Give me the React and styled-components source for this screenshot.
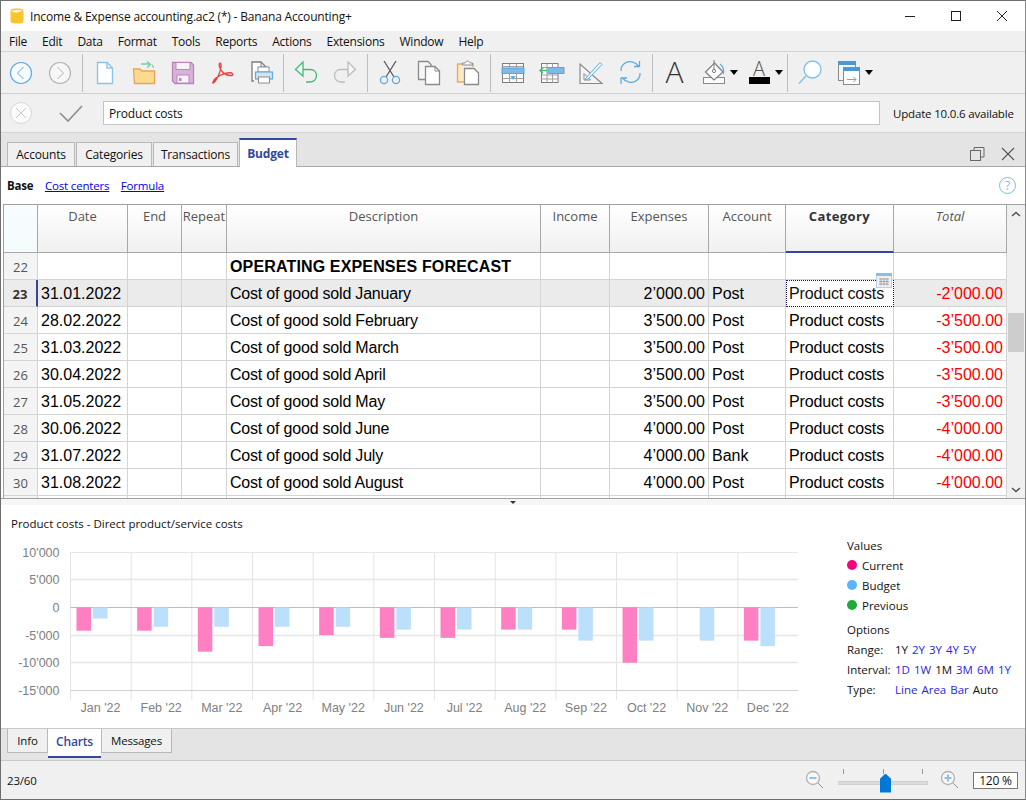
import React from 'react';
import styled, { createGlobalStyle } from 'styled-components';

const UI_FONT = '"Open Sans", "Noto Sans", sans-serif';
const CELL_FONT = '"Liberation Sans", Arial, sans-serif';
const BLUE = '#34489a';

const GlobalStyle = createGlobalStyle`
	html, body { margin: 0; padding: 0; background: #fff; overflow: hidden; }
	* { box-sizing: border-box; }
`;

const rows = [
	{ no: 22, title: 'OPERATING EXPENSES FORECAST' },
	{ no: 23, date: '31.01.2022', desc: 'Cost of good sold January', exp: '2’000.00', acc: 'Post', total: '-2’000.00', current: true },
	{ no: 24, date: '28.02.2022', desc: 'Cost of good sold February', exp: '3’500.00', acc: 'Post', total: '-3’500.00' },
	{ no: 25, date: '31.03.2022', desc: 'Cost of good sold March', exp: '3’500.00', acc: 'Post', total: '-3’500.00' },
	{ no: 26, date: '30.04.2022', desc: 'Cost of good sold April', exp: '3’500.00', acc: 'Post', total: '-3’500.00' },
	{ no: 27, date: '31.05.2022', desc: 'Cost of good sold May', exp: '3’500.00', acc: 'Post', total: '-3’500.00' },
	{ no: 28, date: '30.06.2022', desc: 'Cost of good sold June', exp: '4’000.00', acc: 'Post', total: '-4’000.00' },
	{ no: 29, date: '31.07.2022', desc: 'Cost of good sold July', exp: '4’000.00', acc: 'Bank', total: '-4’000.00' },
	{ no: 30, date: '31.08.2022', desc: 'Cost of good sold August', exp: '4’000.00', acc: 'Post', total: '-4’000.00' },
];

const months = [
	{ label: "Jan '22", current: 4200, budget: 2000 },
	{ label: "Feb '22", current: 4200, budget: 3500 },
	{ label: "Mar '22", current: 8000, budget: 3500 },
	{ label: "Apr '22", current: 7000, budget: 3500 },
	{ label: "May '22", current: 5000, budget: 3500 },
	{ label: "Jun '22", current: 5500, budget: 4000 },
	{ label: "Jul '22", current: 5500, budget: 4000 },
	{ label: "Aug '22", current: 4000, budget: 4000 },
	{ label: "Sep '22", current: 4000, budget: 6000 },
	{ label: "Oct '22", current: 10000, budget: 6000 },
	{ label: "Nov '22", current: 0, budget: 6000 },
	{ label: "Dec '22", current: 6000, budget: 7000 },
];

const Icon = ( { children, w = 30, h = 30 } ) => (
	<svg width={ w } height={ h } viewBox={ `0 0 ${ w } ${ h }` } fill="none">{ children }</svg>
);

const icons = {
	back: <Icon><circle cx="15" cy="15" r="10.5" fill="#f7fbfe" stroke="#5fabdf" strokeWidth="1.2" /><path d="M17.5 9 L11.5 15 L17.5 21" stroke="#5fabdf" /></Icon>,
	forward: <Icon><circle cx="15" cy="15" r="10.5" fill="#f7f7f7" stroke="#b4b4b4" strokeWidth="1.2" /><path d="M12.5 9 L18.5 15 L12.5 21" stroke="#b4b4b4" /></Icon>,
	newDoc: <Icon><path d="M7.5 4.5 H17 L22.5 10 V25.5 H7.5 Z" fill="#fcfeff" stroke="#8cc3ea" strokeWidth="1.4" /><path d="M17 4.5 V10 H22.5" stroke="#8cc3ea" strokeWidth="1.4" /></Icon>,
	open: <Icon><path d="M12 6 H21 M18 3.5 L21.5 6.5 L18 9.5" stroke="#7bcba0" strokeWidth="1.4" /><path d="M23 7 C 24 8 24.5 9 24.5 10" stroke="#7bcba0" strokeWidth="1.2" /><path d="M4.5 11 H11 L13 13 H25.5 V25.5 H5.5 Z" fill="#fbdc8f" stroke="#f0a05c" strokeWidth="1.3" /></Icon>,
	save: <Icon><path d="M4.5 4.5 H23 L25.5 7 V25.5 H7 L4.5 23 Z" fill="#d8b3d9" stroke="#bb84bb" strokeWidth="1.3" /><rect x="8" y="4.5" width="14" height="7" fill="#f8f2f8" stroke="#bb84bb" /><rect x="9" y="17" width="12" height="8" fill="#f8f2f8" stroke="#bb84bb" /><rect x="11" y="20" width="2.5" height="3" fill="#bb84bb" /></Icon>,
	pdf: <Icon><path d="M6 25 C 9 23.5 13 16 14 9 C 14.5 4 11.5 4 12.5 8.5 C 13.5 13 18 18 24.5 17.5 C 27 17 25.5 14.5 22 14.8 C 17 15.3 10 18 7 22 C 5.5 24.5 6 25.5 6 25 Z" stroke="#e2483f" strokeWidth="1.4" /></Icon>,
	print: <Icon><path d="M8 23 H6 V4 H15 L20 9 V12" stroke="#7d7d7d" strokeWidth="1.3" fill="#fbfbfb" /><path d="M15 4 V9 H20" stroke="#7d7d7d" /><rect x="12" y="9" width="11" height="5" fill="#fff" stroke="#8c8c8c" /><rect x="9.5" y="14" width="17" height="7" fill="#cfe5f6" stroke="#5fabdf" strokeWidth="1.2" /><rect x="12.5" y="19" width="11" height="6" fill="#fff" stroke="#8c8c8c" /></Icon>,
	undo: <Icon><path d="M12 4 L4.5 11.5 L12 18 Z" fill="#f5fcf8" stroke="#44b878" strokeWidth="1.3" /><path d="M12 11.5 H19 C 23 11.5 25.5 14 25.5 17.5 C 25.5 21.5 22.5 24 19 24 H15" stroke="#44b878" strokeWidth="1.3" /></Icon>,
	redo: <Icon><path d="M18 4 L25.5 11.5 L18 18 Z" fill="#f7f7f7" stroke="#bcbcbc" strokeWidth="1.3" /><path d="M18 11.5 H11 C 7 11.5 4.5 14 4.5 17.5 C 4.5 21.5 7.5 24 11 24 H15" stroke="#bcbcbc" strokeWidth="1.3" /></Icon>,
	cut: <Icon><path d="M9 3 L19 19 M21 3 L11 19" stroke="#5a5a5a" strokeWidth="1.3" /><circle cx="9" cy="22" r="3.6" stroke="#5fabdf" strokeWidth="1.3" /><circle cx="21" cy="22" r="3.6" stroke="#5fabdf" strokeWidth="1.3" /></Icon>,
	copy: <Icon><path d="M4.5 3.5 H14 L17 6.5 V21.5 H4.5 Z" fill="#f6f6f6" stroke="#8a8a8a" strokeWidth="1.3" /><path d="M11.5 8.5 H21 L25.5 13 V26.5 H11.5 Z" fill="#fff" stroke="#8a8a8a" strokeWidth="1.3" /><path d="M21 8.5 V13 H25.5" stroke="#8a8a8a" /></Icon>,
	paste: <Icon><path d="M9 6 H4.5 V24 H11" fill="#fde9c2" stroke="#f0a85c" strokeWidth="1.4" /><path d="M9 6 H20 V9" stroke="#f0a85c" strokeWidth="1.4" /><path d="M9.5 7 V5 H12 C 12.5 2.5 16.5 2.5 17 5 H19.5 V7 Z" fill="#fff" stroke="#8a8a8a" /><path d="M11.5 10.5 H21 L25.5 15 V26.5 H11.5 Z" fill="#fff" stroke="#8a8a8a" strokeWidth="1.3" /></Icon>,
	insertRow: <Icon><rect x="4.5" y="5.5" width="21" height="19" fill="#fafafa" stroke="#7d7d7d" /><path d="M4.5 8.5 H25.5 M4.5 20.5 H25.5 M11.5 5.5 V24.5 M18.5 5.5 V24.5" stroke="#a0a0a0" /><rect x="4" y="10" width="22" height="5.5" fill="#7fb9e6" stroke="#5fa5dc" /><path d="M12.5 18 H17.5 L15 22 Z" fill="#5fabdf" /></Icon>,
	insertCol: <Icon><rect x="4.5" y="5.5" width="16.5" height="19" fill="#fafafa" stroke="#7d7d7d" /><path d="M4.5 9.5 H21 M4.5 17 H21 M4.5 21 H21 M10 5.5 V24.5 M15.5 5.5 V24.5" stroke="#a0a0a0" /><rect x="11" y="9.5" width="16" height="6" fill="#7fb9e6" stroke="#5fa5dc" /><path d="M3 12.5 H10 M6 10 L3 12.5 L6 15" stroke="#44b878" strokeWidth="1.4" /></Icon>,
	square: <Icon><path d="M4 6 V25.5 H26 Z" fill="#f4f4f4" stroke="#8a8a8a" strokeWidth="1.2" /><path d="M8 22 H14.5 L8 15.5 Z" fill="#fff" stroke="#8a8a8a" /><path d="M10 20 L24 4.5 L26 6.5 L12 21 L9 21.5 Z" fill="#f3f9fd" stroke="#5fabdf" /></Icon>,
	refresh: <Icon><path d="M6 13 C 5.5 7 11 2.5 17 3.8 C 20 4.4 22 6 23.5 8 M24.5 3 V8.5 H19" stroke="#5fabdf" strokeWidth="1.3" /><path d="M25 15 C 25.5 21 20 25.5 14 24.2 C 11 23.6 9 22 7.5 20 M6 26 V20 H12" stroke="#5fabdf" strokeWidth="1.3" /></Icon>,
	fill: <Icon><rect x="4.5" y="19.5" width="21" height="6" fill="#fbfbfb" stroke="#8a8a8a" /><path d="M15.5 5 L24 14 L15 22 L6.5 14 Z" fill="#fff" stroke="#7d7d7d" strokeWidth="1.2" /><path d="M15 2 V12" stroke="#7d7d7d" /><circle cx="15" cy="13" r="1.6" stroke="#7d7d7d" /><path d="M21 6 C 24 8 25 12 24.5 16" stroke="#5fabdf" strokeWidth="1.2" /></Icon>,
	search: <Icon><circle cx="17.5" cy="11.5" r="8.5" fill="#fcfeff" stroke="#7fbde8" strokeWidth="1.3" /><path d="M11 18 L4 25.5" stroke="#7fbde8" strokeWidth="1.3" /></Icon>,
	windows: <Icon><rect x="4.5" y="3.5" width="17" height="19" fill="#f6f6f6" stroke="#8a8a8a" /><rect x="4.5" y="3.5" width="17" height="3.5" fill="#4c97d6" /><rect x="9.5" y="9.5" width="16" height="17" fill="#fff" stroke="#8a8a8a" /><rect x="9.5" y="9.5" width="16" height="3.5" fill="#4c97d6" /><path d="M13 21.5 H22 M19.5 19 L22 21.5 L19.5 24" stroke="#5fabdf" /></Icon>,
};

function ChartPlot() {
	const left = 69.5;
	const step = 60.67;
	const zero = 65;
	const perUnit = 27.6 / 5000;
	const ticks = [ 10000, 5000, 0, -5000, -10000, -15000 ];
	const tickLabels = [ "10'000", "5'000", '0', "-5'000", "-10'000", "-15'000" ];
	return (
		<ChartSvg width="830" height="186" viewBox="0 0 830 186">
			{ months.map( ( m, i ) => (
				<line key={ m.label } x1={ left + i * step } x2={ left + i * step } y1="10" y2="158" stroke="#e4e4e4" />
			) ) }
			{ ticks.map( ( t, i ) => {
				const y = Math.round( zero - t * perUnit ) + 0.5;
				return (
					<g key={ t }>
						<line x1={ left } x2="797" y1={ y } y2={ y } stroke={ t === 0 ? '#bdbdbd' : t === -15000 ? '#cfcfcf' : '#e6e6e6' } strokeWidth={ t === 0 || t === -15000 || t === 10000 ? 1 : 1.6 } />
						<AxisText x="58.5" y={ y + 4.5 } textAnchor="end">{ tickLabels[ i ] }</AxisText>
					</g>
				);
			} ) }
			{ months.map( ( m, i ) => (
				<g key={ m.label }>
					<rect x={ left + i * step + 6 } y={ zero + 0.5 } width="14.5" height={ m.current * perUnit } fill="#ff7fc3" />
					<rect x={ left + i * step + 22.5 } y={ zero + 0.5 } width="14.5" height={ m.budget * perUnit } fill="#bcdffb" />
					<AxisText x={ left + i * step + 30 } y="170" textAnchor="middle">{ m.label }</AxisText>
				</g>
			) ) }
		</ChartSvg>
	);
}

function OptionRow( { label, items, active } ) {
	return (
		<LegendRow>
			<OptionLabel>{ label }</OptionLabel>
			<OptionList>
				{ items.map( ( item, i ) => <OptionItem key={ i } $active={ i === active }>{ item }</OptionItem> ) }
			</OptionList>
		</LegendRow>
	);
}

function TableRow( { row } ) {
	return (
		<GridRow>
			<RowHead $current={ row.current }>{ row.no }</RowHead>
			<Cell $current={ row.current }>{ row.date }</Cell>
			<Cell $current={ row.current } />
			<Cell $current={ row.current } />
			<Cell $current={ row.current } $bold={ !!row.title } $spacing={ row.title ? 0.15 : -0.2 }>{ row.title || row.desc }</Cell>
			<Cell $current={ row.current } />
			<Cell $current={ row.current } $right>{ row.exp }</Cell>
			<Cell $current={ row.current }>{ row.acc }</Cell>
			{ row.current ? (
				<SelectedCell>
					Product costs
					<CellPicker>
						<svg width="16" height="15" viewBox="0 0 16 15">
							<rect x="0.5" y="0.5" width="15" height="14" fill="#f0f0f0" stroke="#b8cfe6" />
							<rect x="0" y="0" width="16" height="3" fill="#8dbde6" />
							<path d="M3 6 H13 M3 8.5 H13 M3 11 H13 M5 5 V12.5 M8 5 V12.5 M11 5 V12.5" stroke="#a8a8a8" />
						</svg>
					</CellPicker>
				</SelectedCell>
			) : (
				<Cell $spacing={ -0.15 }>{ row.date ? 'Product costs' : '' }</Cell>
			) }
			<Cell $current={ row.current } $right $red>{ row.total }</Cell>
		</GridRow>
	);
}

export default function App() {
	return (
		<Window>
			<GlobalStyle />
			<TitleBar>
				<svg width="14" height="16" viewBox="0 0 14 16">
					<path d="M0.5 3 C 0.5 1 3 0.5 7 0.5 C 11 0.5 13.5 1 13.5 3 V13 C 13.5 15 11 15.5 7 15.5 C 3 15.5 0.5 15 0.5 13 Z" fill="#fcc42c" />
					<path d="M1.5 3 C 4 2 9 2 12 1.8 C 12 4 5 6 1.5 3 Z" fill="#fff8dc" />
				</svg>
				<TitleText>Income &amp; Expense accounting.ac2 (*) - Banana Accounting+</TitleText>
				<WindowButtons>
					<WindowButton>
						<svg width="12" height="12" viewBox="0 0 12 12"><path d="M1 6.5 H11" stroke="#222" /></svg>
					</WindowButton>
					<WindowButton>
						<svg width="12" height="12" viewBox="0 0 12 12"><rect x="1.5" y="1.5" width="9" height="9" fill="none" stroke="#222" /></svg>
					</WindowButton>
					<WindowButton>
						<svg width="12" height="12" viewBox="0 0 12 12"><path d="M1 1 L11 11 M11 1 L1 11" stroke="#222" /></svg>
					</WindowButton>
				</WindowButtons>
			</TitleBar>

			<MenuBar>
				{ [ 'File', 'Edit', 'Data', 'Format', 'Tools', 'Reports', 'Actions', 'Extensions', 'Window', 'Help' ].map( m => <MenuItem key={ m }>{ m }</MenuItem> ) }
			</MenuBar>

			<Toolbar>
				<ToolButton>{ icons.back }</ToolButton>
				<ToolButton>{ icons.forward }</ToolButton>
				<ToolSep />
				<ToolButton>{ icons.newDoc }</ToolButton>
				<ToolButton>{ icons.open }</ToolButton>
				<ToolButton>{ icons.save }</ToolButton>
				<ToolButton>{ icons.pdf }</ToolButton>
				<ToolButton>{ icons.print }</ToolButton>
				<ToolSep />
				<ToolButton>{ icons.undo }</ToolButton>
				<ToolButton>{ icons.redo }</ToolButton>
				<ToolSep />
				<ToolButton>{ icons.cut }</ToolButton>
				<ToolButton>{ icons.copy }</ToolButton>
				<ToolButton>{ icons.paste }</ToolButton>
				<ToolSep />
				<ToolButton>{ icons.insertRow }</ToolButton>
				<ToolButton>{ icons.insertCol }</ToolButton>
				<ToolButton>{ icons.square }</ToolButton>
				<ToolButton>{ icons.refresh }</ToolButton>
				<ToolSep />
				<ToolButton><BigA>A</BigA></ToolButton>
				<MenuTool>{ icons.fill }<Caret /></MenuTool>
				<MenuTool>
					<ColorA>
						<ColorLetter>A</ColorLetter>
						<ColorBar />
					</ColorA>
					<Caret />
				</MenuTool>
				<ToolSep />
				<ToolButton>{ icons.search }</ToolButton>
				<MenuTool>{ icons.windows }<Caret /></MenuTool>
			</Toolbar>

			<FormulaBar>
				<FormulaIcon>
					<svg width="24" height="24" viewBox="0 0 24 24">
						<circle cx="12" cy="12" r="10.5" fill="#fbfbfb" stroke="#d8d8d8" />
						<path d="M7 7 L17 17 M17 7 L7 17" stroke="#c8c8c8" />
					</svg>
				</FormulaIcon>
				<FormulaIcon>
					<svg width="24" height="24" viewBox="0 0 24 24">
						<path d="M1 12 L9 20 L23 5" fill="none" stroke="#909090" strokeWidth="1.7" />
					</svg>
				</FormulaIcon>
				<FormulaInput>Product costs</FormulaInput>
				<UpdateNote>Update 10.0.6 available</UpdateNote>
			</FormulaBar>

			<TabStrip>
				<Tab $width={ 68 }>Accounts</Tab>
				<Tab $width={ 76 }>Categories</Tab>
				<Tab $width={ 85 }>Transactions</Tab>
				<ActiveTab>Budget</ActiveTab>
				<StripIcons>
					<svg width="16" height="16" viewBox="0 0 16 16" fill="none">
						<path d="M5 4 V1.5 H15 V11 H12" stroke="#666" />
						<rect x="1.5" y="4.5" width="10" height="10" stroke="#666" />
					</svg>
					<svg width="14" height="14" viewBox="0 0 14 14" fill="none">
						<path d="M1 1 L13 13 M13 1 L1 13" stroke="#555" strokeWidth="1.1" />
					</svg>
				</StripIcons>
			</TabStrip>

			<SubTabs>
				<SubTabActive>Base</SubTabActive>
				<SubTabLink>Cost centers</SubTabLink>
				<SubTabLink>Formula</SubTabLink>
				<HelpBadge>?</HelpBadge>
			</SubTabs>

			<TableFrame>
				<TableBody>
					<HeaderRow>
						<HeaderCorner />
						<HeaderCell>Date</HeaderCell>
						<HeaderCell>End</HeaderCell>
						<HeaderCell>Repeat</HeaderCell>
						<HeaderCell>Description</HeaderCell>
						<HeaderCell>Income</HeaderCell>
						<HeaderCell>Expenses</HeaderCell>
						<HeaderCell>Account</HeaderCell>
						<CategoryHeader>Category</CategoryHeader>
						<HeaderCell $italic>Total</HeaderCell>
					</HeaderRow>
					{ rows.map( row => <TableRow key={ row.no } row={ row } /> ) }
					<GridRow>
						<RowHead />
						{ Array.from( { length: 9 } ).map( ( _, i ) => <Cell key={ i } /> ) }
					</GridRow>
				</TableBody>
				<ScrollBar>
					<ScrollArrow>
						<svg width="10" height="6" viewBox="0 0 10 6"><path d="M1 5 L5 1.5 L9 5" fill="none" stroke="#555" strokeWidth="1.6" /></svg>
					</ScrollArrow>
					<ScrollThumb />
					<ScrollArrow $bottom>
						<svg width="10" height="6" viewBox="0 0 10 6"><path d="M1 1 L5 4.5 L9 1" fill="none" stroke="#555" strokeWidth="1.6" /></svg>
					</ScrollArrow>
				</ScrollBar>
			</TableFrame>

			<Splitter><SplitterMark /></Splitter>

			<ChartPanel>
				<ChartColumn>
					<ChartTitle>Product costs - Direct product/service costs</ChartTitle>
					<ChartPlot />
				</ChartColumn>
				<Legend>
					<LegendRow>Values</LegendRow>
					<LegendRow><Dot $color="#f5067f" />Current</LegendRow>
					<LegendRow><Dot $color="#5cb2fb" />Budget</LegendRow>
					<LegendRow><Dot $color="#22a83c" />Previous</LegendRow>
					<OptionsTitle>Options</OptionsTitle>
					<OptionRow label="Range:" items={ [ '1Y', '2Y', '3Y', '4Y', '5Y' ] } active={ 0 } />
					<OptionRow label="Interval:" items={ [ '1D', '1W', '1M', '3M', '6M', '1Y' ] } active={ 2 } />
					<OptionRow label="Type:" items={ [ 'Line', 'Area', 'Bar', 'Auto' ] } active={ 3 } />
				</Legend>
			</ChartPanel>

			<BottomTabs>
				<BottomTab $width={ 41 }>Info</BottomTab>
				<BottomTabActive>Charts</BottomTabActive>
				<BottomTab $width={ 71 }>Messages</BottomTab>
			</BottomTabs>

			<StatusBar>
				<StatusText>23/60</StatusText>
				<ZoomArea>
					<svg width="20" height="20" viewBox="0 0 20 20" fill="none">
						<circle cx="8" cy="8" r="6.5" fill="#f8f8f8" stroke="#b0b0b0" strokeWidth="1.3" />
						<path d="M4.5 8 H11.5" stroke="#8dc1ea" strokeWidth="2" />
						<path d="M13 13 L18 18" stroke="#909090" />
					</svg>
					<Slider>
						<SliderTick $at={ 5 } />
						<SliderTick $at={ 45 } />
						<SliderTick $at={ 84 } />
						<SliderTrack />
						<SliderThumb />
					</Slider>
					<svg width="20" height="20" viewBox="0 0 20 20" fill="none">
						<circle cx="8" cy="8" r="6.5" fill="#f8f8f8" stroke="#b0b0b0" strokeWidth="1.3" />
						<path d="M4.5 8 H11.5 M8 4.5 V11.5" stroke="#8dc1ea" strokeWidth="2" />
						<path d="M13 13 L18 18" stroke="#909090" />
					</svg>
					<ZoomInput>120 %</ZoomInput>
				</ZoomArea>
			</StatusBar>
		</Window>
	);
}

const Window = styled.div`
	width: 1026px;
	height: 800px;
	display: flex;
	flex-direction: column;
	border: 1px solid #6e6e6e;
	border-right-color: #8a8a8a;
	background: #fff;
	font-family: ${ UI_FONT };
	font-size: 12px;
	letter-spacing: -0.18px;
	color: #111;
	overflow: hidden;
`;
const TitleBar = styled.div`
	height: 30px;
	flex: none;
	display: flex;
	align-items: center;
	padding-left: 9px;
	background: #fff;
`;
const TitleText = styled.div`
	margin-left: 6px;
	font-size: 12px;
	color: #111;
`;
const WindowButtons = styled.div`
	margin-left: auto;
	display: flex;
`;
const WindowButton = styled.div`
	width: 46px;
	height: 30px;
	display: flex;
	align-items: center;
	justify-content: center;
`;
const MenuBar = styled.div`
	height: 21px;
	flex: none;
	display: flex;
	align-items: center;
	padding-left: 8px;
	gap: 15px;
	background: #f0f0f0;
	border-bottom: 1px solid #d4d4d4;
`;
const MenuItem = styled.div`
	font-size: 12px;
	letter-spacing: -0.24px;
`;
const Toolbar = styled.div`
	height: 42px;
	flex: none;
	display: flex;
	align-items: center;
	background: #f0f0f0;
	border-bottom: 1px solid #d0d0d0;
`;
const ToolButton = styled.div`
	width: 39px;
	height: 39px;
	flex: none;
	display: flex;
	align-items: center;
	justify-content: center;
`;
const MenuTool = styled.div`
	height: 39px;
	flex: none;
	display: flex;
	align-items: center;
	padding-left: 5px;
`;
const ToolSep = styled.div`
	width: 1px;
	height: 38px;
	flex: none;
	margin: 0 2px 0 3px;
	background: #bdbdbd;
`;
const Caret = styled.span`
	width: 0;
	height: 0;
	margin: 0 1px;
	border-left: 4px solid transparent;
	border-right: 4px solid transparent;
	border-top: 5px solid #000;
`;
const BigA = styled.span`
	font-family: ${ UI_FONT };
	font-weight: 300;
	font-size: 30px;
	line-height: 1;
	color: #333;
	margin-top: -2px;
`;
const ColorA = styled.div`
	width: 30px;
	display: flex;
	flex-direction: column;
	align-items: center;
`;
const ColorLetter = styled.span`
	font-family: ${ UI_FONT };
	font-weight: 300;
	font-size: 20px;
	line-height: 16px;
	color: #555;
`;
const ColorBar = styled.div`
	width: 21px;
	height: 7px;
	background: #000;
`;
const FormulaBar = styled.div`
	height: 39px;
	flex: none;
	display: flex;
	align-items: center;
	background: #f0f0f0;
	border-bottom: 1px solid #d4d4d4;
`;
const FormulaIcon = styled.div`
	width: 50px;
	flex: none;
	padding-left: 8px;
	display: flex;
	align-items: center;
	justify-content: flex-start;
`;
const FormulaInput = styled.div`
	margin-left: 2px;
	width: 777px;
	height: 24px;
	flex: none;
	display: flex;
	align-items: center;
	padding-left: 5px;
	background: #fff;
	border: 1px solid #c4c4c4;
	font-size: 12px;
`;
const UpdateNote = styled.div`
	margin-left: 13px;
	font-size: 11.5px;
	white-space: nowrap;
`;
const TabStrip = styled.div`
	height: 34px;
	flex: none;
	display: flex;
	align-items: flex-end;
	padding-left: 6px;
	background: #e4e4e4;
	border-bottom: 1px solid #a8a8a8;
`;
const Tab = styled.div`
	width: ${ p => p.$width }px;
	height: 24px;
	margin-right: 1px;
	display: flex;
	align-items: center;
	justify-content: center;
	background: #f0f0f0;
	border: 1px solid #b8b8b8;
	border-bottom: none;
	font-size: 12px;
`;
const ActiveTab = styled.div`
	width: 58px;
	height: 29px;
	margin-bottom: -1px;
	display: flex;
	align-items: center;
	justify-content: center;
	background: #fff;
	border-top: 2px solid ${ BLUE };
	border-left: 1px solid #b8b8b8;
	border-right: 1px solid #b8b8b8;
	font-size: 12px;
	font-weight: 700;
	color: ${ BLUE };
`;
const StripIcons = styled.div`
	margin-left: auto;
	align-self: center;
	display: flex;
	align-items: center;
	gap: 16px;
	padding: 8px 10px 0 0;
`;
const SubTabs = styled.div`
	height: 37px;
	flex: none;
	display: flex;
	align-items: center;
	padding: 0 9px 0 6px;
	gap: 11.5px;
	background: #fff;
`;
const SubTabActive = styled.span`
	font-size: 11.5px;
	font-weight: 700;
`;
const SubTabLink = styled.a`
	font-size: 11.5px;
	color: #0000ee;
	text-decoration: underline;
`;
const HelpBadge = styled.div`
	margin-left: auto;
	width: 17px;
	height: 17px;
	display: flex;
	align-items: center;
	justify-content: center;
	border: 1px solid #79bce9;
	border-radius: 50%;
	font-size: 12px;
	color: #79bce9;
`;
const TableFrame = styled.div`
	height: 294px;
	flex: none;
	display: flex;
	margin-left: 2px;
	border-top: 1px solid #a0a0a0;
	border-left: 1px solid #a0a0a0;
	overflow: hidden;
`;
const TableBody = styled.div`
	width: 1003px;
	flex: none;
`;
const COLUMNS = '34px 90px 54px 45px 314px 69px 99px 77px 108px 113px';
const HeaderRow = styled.div`
	display: grid;
	grid-template-columns: ${ COLUMNS };
	height: 48px;
`;
const HeaderCorner = styled.div`
	background: linear-gradient( #f6fcff, #f4fbfd );
	border-right: 1px solid #a8a8a8;
	border-bottom: 1px solid #a8a8a8;
`;
const HeaderCell = styled.div`
	padding-top: 2px;
	text-align: center;
	background: linear-gradient( #fff, #f0f0f0 );
	border-right: 1px solid #a8a8a8;
	border-bottom: 1px solid #a8a8a8;
	font-size: 13px;
	letter-spacing: 0;
	font-style: ${ p => p.$italic ? 'italic' : 'normal' };
	color: #555;
	white-space: nowrap;
`;
const CategoryHeader = styled( HeaderCell )`
	font-weight: 700;
	letter-spacing: 0.4px;
	color: #333;
	border-bottom: 2px solid ${ BLUE };
`;
const GridRow = styled.div`
	display: grid;
	grid-template-columns: ${ COLUMNS };
	height: 27px;
	font-family: ${ CELL_FONT };
	font-size: 16px;
	letter-spacing: 0;
`;
const RowHead = styled.div`
	display: flex;
	align-items: center;
	justify-content: center;
	padding-top: 1px;
	background: ${ p => p.$current ? '#ececec' : '#f4f4f4' };
	border-right: ${ p => p.$current ? `2px solid ${ BLUE }` : '1px solid #d4d4d4' };
	border-bottom: 1px solid #d4d4d4;
	font-family: ${ UI_FONT };
	font-size: 13px;
	font-weight: ${ p => p.$current ? 700 : 400 };
	color: ${ p => p.$current ? '#333' : '#555' };
`;
const Cell = styled.div`
	padding: 1px 3px 0;
	display: flex;
	align-items: center;
	justify-content: ${ p => p.$right ? 'flex-end' : 'flex-start' };
	background: ${ p => p.$current ? '#ebebeb' : '#fff' };
	border-right: 1px solid #d4d4d4;
	border-bottom: 1px solid #d4d4d4;
	font-weight: ${ p => p.$bold ? 700 : 400 };
	letter-spacing: ${ p => p.$spacing || 0 }px;
	color: ${ p => p.$red ? '#fb0000' : '#000' };
	white-space: nowrap;
`;
const SelectedCell = styled.div`
	position: relative;
	padding: 1px 2px 0;
	display: flex;
	align-items: center;
	background: #fff;
	border: 1px dotted #0b1a6b;
	letter-spacing: -0.15px;
	white-space: nowrap;
`;
const CellPicker = styled.div`
	position: absolute;
	top: -8px;
	right: 1px;
	display: flex;
`;
const ScrollBar = styled.div`
	width: 18px;
	flex: none;
	display: flex;
	flex-direction: column;
	background: #f0f0f0;
`;
const ScrollArrow = styled.div`
	height: 17px;
	flex: none;
	margin-top: ${ p => p.$bottom ? 'auto' : '0' };
	display: flex;
	align-items: center;
	justify-content: center;
`;
const ScrollThumb = styled.div`
	height: 39px;
	margin: 91px 1px 0;
	background: #cdcdcd;
`;
const Splitter = styled.div`
	height: 7px;
	flex: none;
	display: flex;
	justify-content: center;
	background: #f6f6f6;
	border-top: 1px solid #a0a0a0;
`;
const SplitterMark = styled.div`
	width: 0;
	height: 0;
	margin-top: 2px;
	border-left: 3px solid transparent;
	border-right: 3px solid transparent;
	border-top: 3px solid #333;
`;
const ChartPanel = styled.div`
	height: 224px;
	flex: none;
	display: flex;
	background: #fff;
	border-bottom: 1px solid #c8c8c8;
`;
const ChartColumn = styled.div`
	width: 846px;
	flex: none;
	display: flex;
	flex-direction: column;
`;
const ChartTitle = styled.div`
	height: 37px;
	flex: none;
	padding: 11px 0 0 10px;
	font-size: 11.5px;
	letter-spacing: 0;
`;
const ChartSvg = styled.svg`
	display: block;
	flex: none;
`;
const AxisText = styled.text`
	font-family: ${ CELL_FONT };
	font-size: 12.5px;
	letter-spacing: 0;
	fill: #808080;
`;
const Legend = styled.div`
	padding-top: 30px;
	display: flex;
	flex-direction: column;
`;
const LegendRow = styled.div`
	height: 20px;
	display: flex;
	align-items: center;
	font-size: 11.5px;
	letter-spacing: 0;
	white-space: nowrap;
`;
const OptionsTitle = styled( LegendRow )`
	margin-top: 4px;
`;
const Dot = styled.span`
	width: 10px;
	height: 10px;
	margin-right: 5px;
	border-radius: 50%;
	background: ${ p => p.$color };
`;
const OptionLabel = styled.span`
	width: 48px;
	flex: none;
`;
const OptionList = styled.div`
	display: flex;
	gap: 4px;
`;
const OptionItem = styled.span`
	color: ${ p => p.$active ? '#111' : '#1f1fe0' };
`;
const BottomTabs = styled.div`
	height: 32px;
	flex: none;
	display: flex;
	align-items: flex-start;
	padding-left: 6px;
	background: #e4e4e4;
	border-bottom: 1px solid #c8c8c8;
`;
const BottomTab = styled.div`
	width: ${ p => p.$width }px;
	height: 24px;
	display: flex;
	align-items: center;
	justify-content: center;
	background: #f0f0f0;
	border: 1px solid #b8b8b8;
	border-top: none;
	font-size: 11.5px;
`;
const BottomTabActive = styled.div`
	width: 53px;
	height: 29px;
	padding-bottom: 2px;
	display: flex;
	align-items: center;
	justify-content: center;
	background: #fff;
	border-bottom: 2px solid ${ BLUE };
	font-size: 12px;
	font-weight: 600;
	color: ${ BLUE };
`;
const StatusBar = styled.div`
	flex: 1;
	display: flex;
	align-items: center;
	padding: 0 6px;
	background: #f0f0f0;
`;
const StatusText = styled.div`
	font-size: 11.5px;
`;
const ZoomArea = styled.div`
	margin-left: auto;
	display: flex;
	align-items: center;
`;
const Slider = styled.div`
	position: relative;
	width: 90px;
	height: 25px;
	margin: 0 12px 0 13px;
`;
const SliderTick = styled.span`
	position: absolute;
	top: 1px;
	left: ${ p => p.$at }px;
	width: 1px;
	height: 5px;
	background: #999;
`;
const SliderTrack = styled.div`
	position: absolute;
	top: 13px;
	left: 0;
	right: 0;
	height: 4px;
	background: #dcdcdc;
	border: 1px solid #d0d0d0;
`;
const SliderThumb = styled.div`
	position: absolute;
	top: 6px;
	left: 42px;
	width: 11px;
	height: 19px;
	background: #0078d7;
	clip-path: polygon( 50% 0, 100% 28%, 100% 100%, 0 100%, 0 28% );
`;
const ZoomInput = styled.div`
	width: 45px;
	height: 17px;
	margin-left: 13px;
	margin-right: 1px;
	display: flex;
	align-items: center;
	justify-content: center;
	background: #fff;
	border: 1px solid #777;
	font-size: 12px;
`;
